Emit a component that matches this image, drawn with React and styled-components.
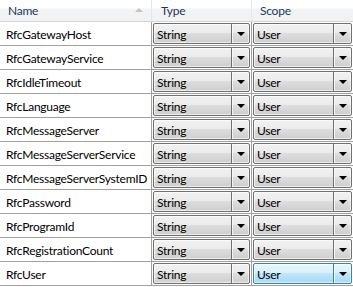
import React from 'react'
import styled, { createGlobalStyle } from 'styled-components'

const rows = [
    'RfcGatewayHost',
    'RfcGatewayService',
    'RfcIdleTimeout',
    'RfcLanguage',
    'RfcMessageServer',
    'RfcMessageServerService',
    'RfcMessageServerSystemID',
    'RfcPassword',
    'RfcProgramId',
    'RfcRegistrationCount',
    'RfcUser',
]

export default function App () {
    return (
        <>
            <Global />
            <Grid>
                <HeadCell>
                    Name
                    <SortArrow />
                </HeadCell>
                <HeadCell>Type</HeadCell>
                <HeadCell $last>Scope</HeadCell>
                {rows.map((name, i) => (
                    <React.Fragment key={name}>
                        <NameCell>{name}</NameCell>
                        <ComboCell>
                            <Combo value='String' />
                        </ComboCell>
                        <ComboCell $last>
                            <Combo value='User' hot={i === rows.length - 1} />
                        </ComboCell>
                    </React.Fragment>
                ))}
            </Grid>
        </>
    )
}

function Combo ({ value, hot }) {
    return (
        <ComboBox $hot={hot}>
            <ComboText>{value}</ComboText>
            <ComboButton $hot={hot}>
                <Arrow />
            </ComboButton>
        </ComboBox>
    )
}

const Global = createGlobalStyle`
    html, body {
        margin: 0;
        padding: 0;
        background: #ffffff;
    }
    body {
        font-family: Lato, "Liberation Sans", sans-serif;
        font-size: 12px;
        letter-spacing: -0.25px;
        color: #000;
        overflow: hidden;
    }
`

const Grid = styled.div`
    display: grid;
    grid-template-columns: 152px 100px 101px;
    grid-template-rows: 22px repeat(11, 24px);
    width: 353px;
`

const HeadCell = styled.div`
    position: relative;
    display: flex;
    align-items: center;
    padding-left: ${p => (p.$last ? 8 : 9)}px;
    background: linear-gradient(#ffffff 0%, #ffffff 40%, #f2f3f5 41%, #f1f2f4 100%);
    border-right: ${p => (p.$last ? 'none' : '1px solid #e3e8ee')};
    border-bottom: 1px solid #d5d5d5;
    color: #1e395b;
    box-sizing: border-box;
    &:first-child {
        padding-left: 8px;
    }
`

const SortArrow = styled.span`
    position: absolute;
    right: 8px;
    top: 8px;
    width: 0;
    height: 0;
    border-left: 4px solid transparent;
    border-right: 4px solid transparent;
    border-bottom: 4px solid #c4c4c4;
`

const NameCell = styled.div`
    display: flex;
    align-items: center;
    padding: 1px 0 0 6px;
    border-right: 1px solid #a0a0a0;
    border-bottom: 1px solid #a0a0a0;
    box-sizing: border-box;
    white-space: nowrap;
    overflow: hidden;
`

const ComboCell = styled.div`
    display: flex;
    padding: 1px;
    border-right: ${p => (p.$last ? 'none' : '1px solid #a0a0a0')};
    border-bottom: 1px solid #a0a0a0;
    box-sizing: border-box;
`

const ComboBox = styled.div`
    flex: 1;
    display: flex;
    border: 1px solid ${p => (p.$hot ? '#3c7fb1' : '#707070')};
    border-radius: 2px;
    background: ${p => (p.$hot
        ? 'linear-gradient(#eaf6fd 0%, #d9f0fc 45%, #bee6fd 50%, #a7d9f5 100%)'
        : 'linear-gradient(#f2f2f2 0%, #ebebeb 45%, #dddddd 50%, #cfcfcf 100%)')};
    box-shadow: inset 0 0 0 1px rgba(255, 255, 255, .6);
`

const ComboText = styled.span`
    flex: 1;
    display: flex;
    align-items: center;
    padding: 1px 0 0 3px;
`

const ComboButton = styled.span`
    width: 17px;
    display: flex;
    align-items: center;
    justify-content: center;
    border-left: 1px solid ${p => (p.$hot ? '#3c7fb1' : '#707070')};
    box-shadow: inset 1px 0 0 rgba(255, 255, 255, .7);
`

const Arrow = styled.span`
    width: 0;
    height: 0;
    border-left: 4px solid transparent;
    border-right: 4px solid transparent;
    border-top: 4px solid #000;
`
